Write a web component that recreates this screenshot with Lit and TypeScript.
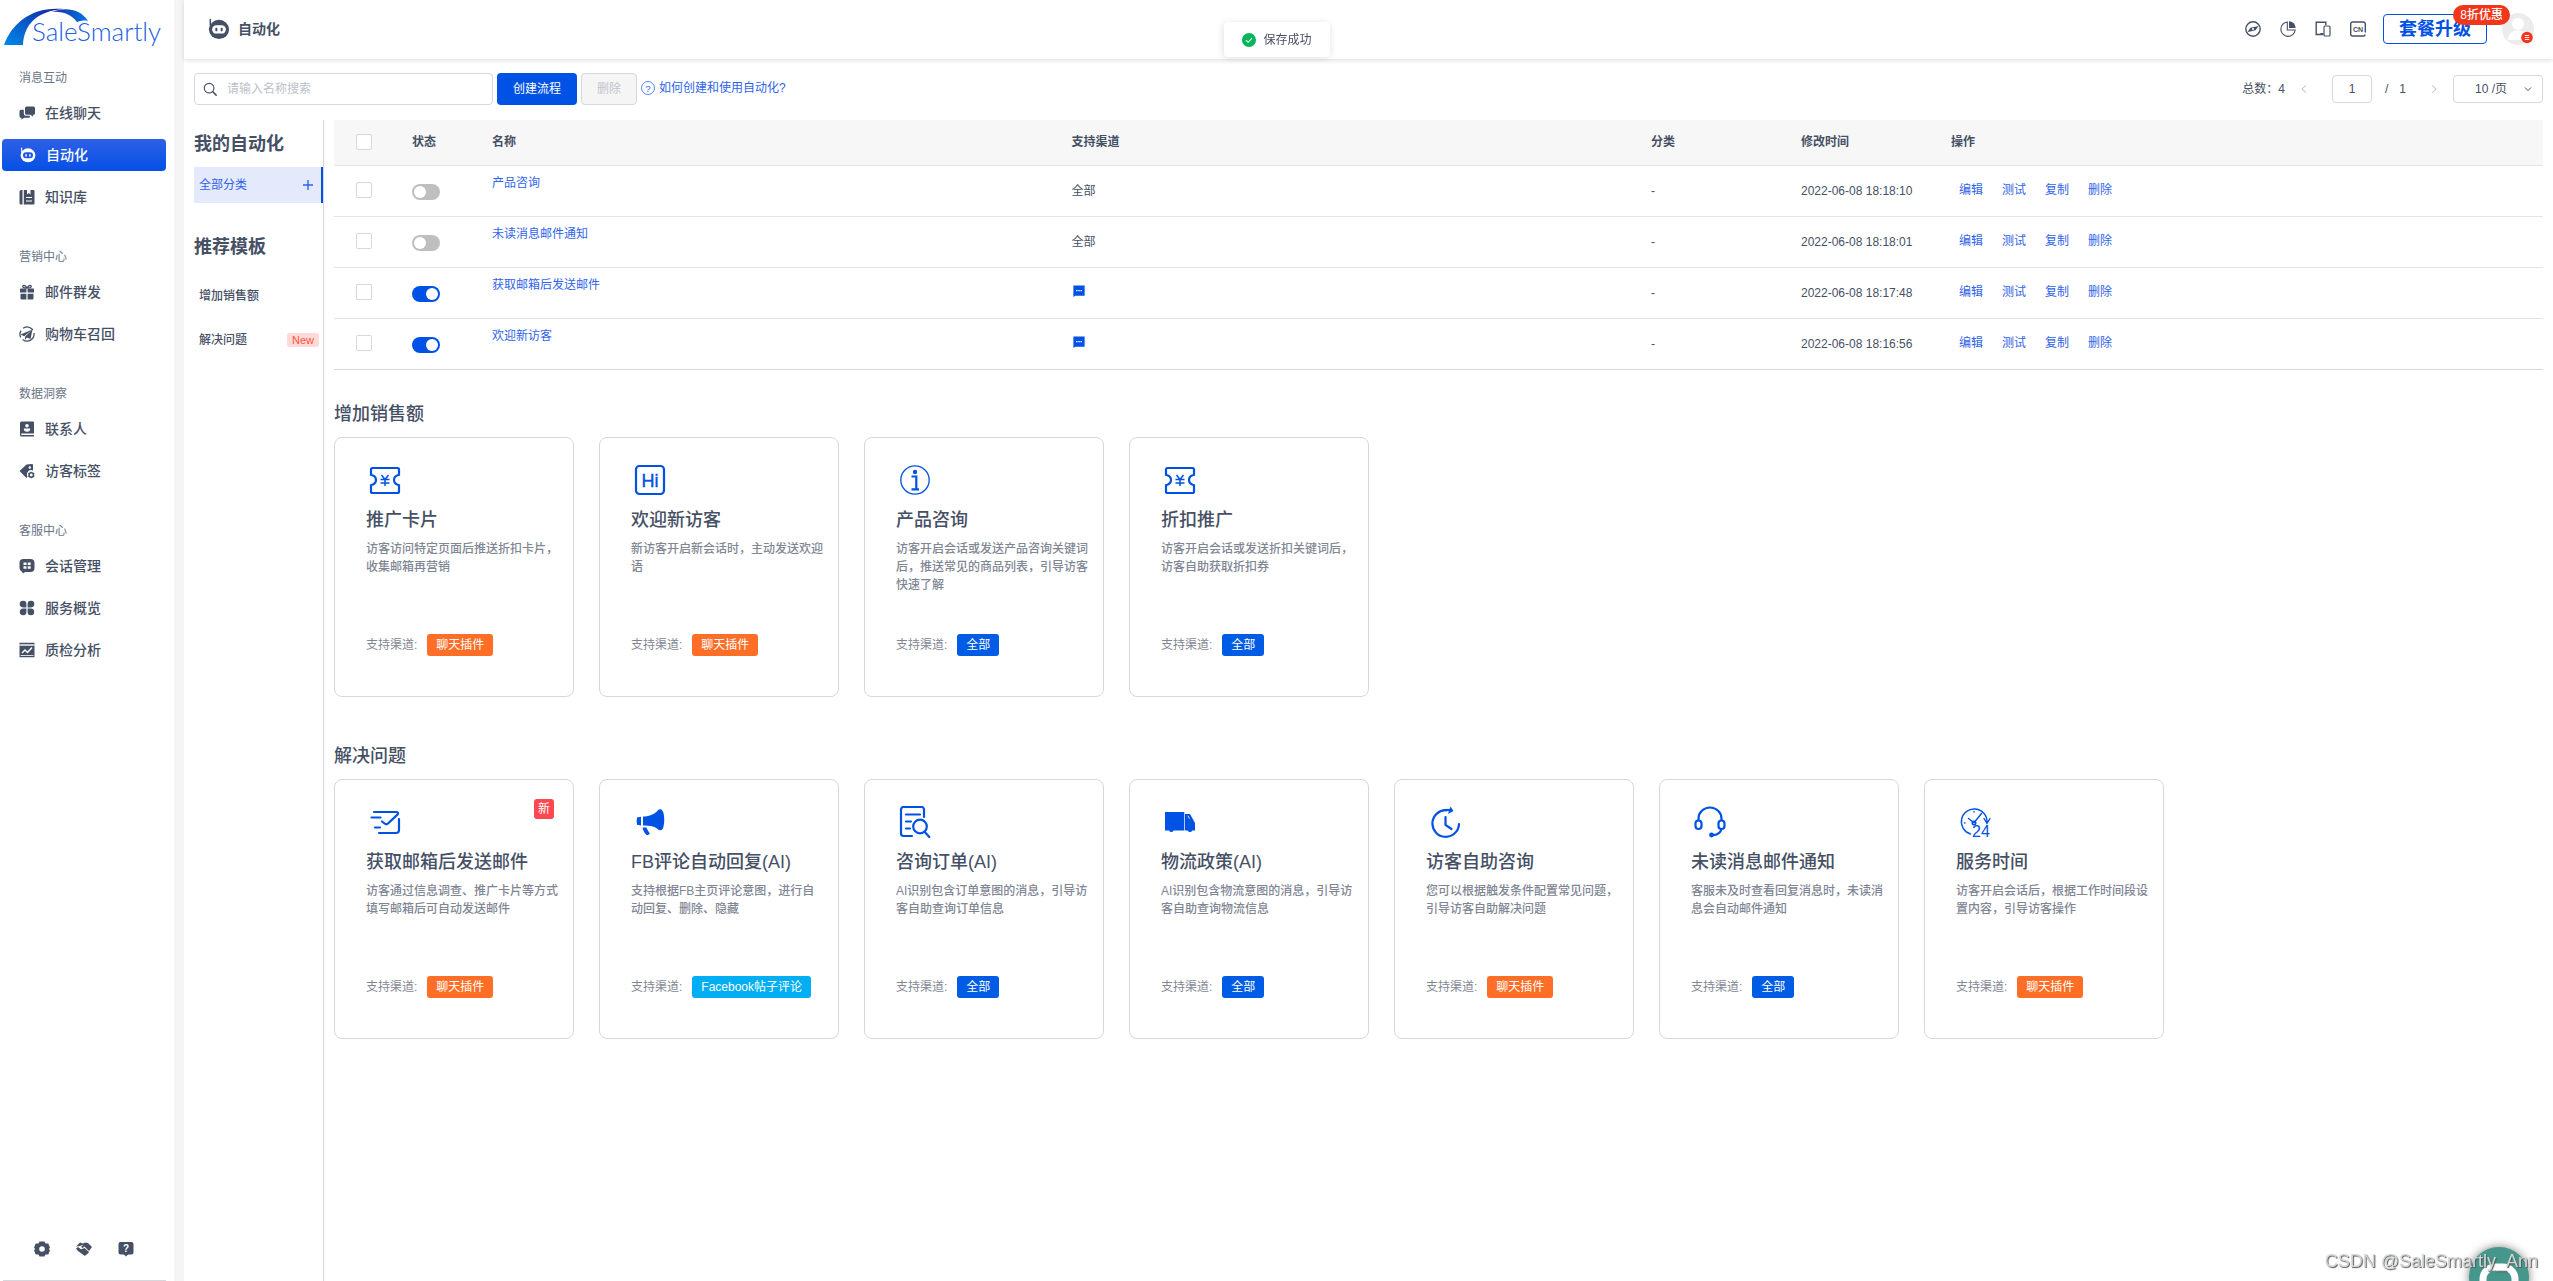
import { LitElement, html, svg, css, nothing } from "lit";
import { customElement, state } from "lit/decorators.js";
import { classMap } from "lit/directives/class-map.js";

const icon = (box: number, size: string, body: unknown) => html`
  <svg class="icon ${size}" viewBox="0 0 ${box} ${box}" aria-hidden="true">${body}</svg>
`;

const robot = (hole: string) => svg`
  <path d="M2.5 1.5v6" stroke="currentColor" stroke-width="1.6" stroke-linecap="round" fill="none"/>
  <ellipse cx="12" cy="12.500" rx="11" ry="10.500" fill="currentColor"/>
  <rect x="4.500" y="8" width="15" height="9" rx="4.500" fill="${hole}"/>
  <rect x="8" y="10.500" width="2.200" height="4" rx="1" fill="currentColor"/>
  <rect x="13.800" y="10.500" width="2.200" height="4" rx="1" fill="currentColor"/>`;

const glyphs = {
  chat: svg`
    <path fill="currentColor" d="M7.500 1.500h7A1.500 1.500 0 0 1 16 3v5.200a1.500 1.500 0 0 1-1.500 1.500H14v2l-2.500-2H7.500A1.500 1.500 0 0 1 6 8.200V3a1.500 1.500 0 0 1 1.500-1.500z"/>
    <path fill="currentColor" d="M4.800 4.800H2A1.500 1.500 0 0 0 .5 6.300v5A1.500 1.500 0 0 0 2 12.800h.5v2l2.500-2h4.500a1.500 1.500 0 0 0 1.500-1.500v-.5H7a2.200 2.200 0 0 1-2.200-2.200z"/>`,
  book: svg`
    <path fill="currentColor" d="M.5 2.500A1.500 1.500 0 0 1 2 1h1.500v14.500H2A1.500 1.500 0 0 1 .5 14z"/>
    <path fill="currentColor" d="M4.800 1H8v4.500L9.700 4l1.800 1.500V1h3A1 1 0 0 1 15.500 2v12.500a1 1 0 0 1-1 1H4.800z"/>
    <path d="M7 8.500h6M7 12h6" stroke="#fff" stroke-width="1.200"/>`,
  gift: svg`
    <path d="M8 4C6 .5 3.500 1 3.800 2.600 4 3.700 6 4 8 4zM8 4c2-3.500 4.500-3 4.200-1.400C12 3.700 10 4 8 4z" fill="none" stroke="currentColor" stroke-width="1.300"/>
    <path fill="currentColor" d="M1.500 4.500h5.900v4H1v-3.500zM8.600 4.500h5.900l.5.500v3.500H8.600zM1.500 9.700h5.900V15.500H2.500a1 1 0 0 1-1-1zM8.600 9.700h5.900v4.800a1 1 0 0 1-1 1H8.600z"/>`,
  send: svg`
    <path d="M4.500 2A7 7 0 0 1 13.500 3.500M15 7.500A7 7 0 0 1 4 13.800M1.500 11A7 7 0 0 1 1.800 5" fill="none" stroke="currentColor" stroke-width="1.300" stroke-linecap="round"/>
    <path fill="currentColor" d="M13.500 3.500 1.500 8.500l3.700 1.800zM13.500 3.500 6 10.700v3l2-2.200 3.500 1.500z"/>`,
  contact: svg`
    <path fill="currentColor" d="M2.500.500h11.500a1 1 0 0 1 1 1V12.500H2.800a.6.600 0 0 0 0 1.500H15v1.500H2.500A1.500 1.500 0 0 1 1 14V2A1.500 1.500 0 0 1 2.500.500z"/>
    <circle cx="8" cy="4.800" r="1.800" fill="#fff"/><path fill="#fff" d="M4.800 7.500h6.400a3.200 3.200 0 0 1-6.400 0z"/>`,
  tag: svg`
    <path fill="currentColor" d="M.5 8 7.500 1.500 13 1a1 1 0 0 1 1 1v5.500a4.300 4.300 0 0 0-5.500 6l-1 1.500z"/>
    <circle cx="10.800" cy="4.500" r="1.200" fill="#fff"/>
    <circle cx="12.300" cy="12" r="2.200" fill="none" stroke="currentColor" stroke-width="1.600"/>
    <path d="M12.300 8.700v1M12.300 14.300v1M9.400 10.300l.9.600M14.300 13.100l.9.600M15.200 10.300l-.9.600M10.300 13.100l-.9.600" stroke="currentColor" stroke-width="1.300"/>`,
  session: svg`
    <path fill="currentColor" d="M4.500 1h7A4 4 0 0 1 15.500 5v5a4 4 0 0 1-4 4H6l-2 1.500-1-1.800A3.800 3.800 0 0 1 .5 10V5a4 4 0 0 1 4-4z"/>
    <path d="M4.500 4.500h3v2.600h-3zM8.700 4.500h3v2.600h-3zM4.500 8.200h3v2.600h-3zM8.700 8.200h3v2.600h-3z" fill="#fff"/>`,
  clover: svg`
    <path fill="currentColor" d="M4 .8a3.300 3.300 0 0 1 3.400 3.300v3.300H4A3.300 3.300 0 0 1 4 .8zM12 .8a3.300 3.300 0 0 1 0 6.600H8.600V4.100A3.300 3.300 0 0 1 12 .8zM4 8.600h3.400v3.300A3.300 3.300 0 1 1 4 8.600zM8.600 8.600H12a3.300 3.300 0 1 1-3.400 3.300z"/>`,
  chart: svg`
    <path fill="currentColor" d="M.5.800h15v1.700H.5zM.5 3.500h15V15.300H.5z"/><path d="M1.500 3h13" stroke="#fff" stroke-width=".8"/>
    <path d="M3 11l3-3 2.500 2.500L13 5.500" fill="none" stroke="#fff" stroke-width="1.400"/><path d="M1.500 13.500h13" stroke="#fff" stroke-width=".8"/>`,
  gear: svg`
    <path fill="currentColor" fill-rule="evenodd" d="M5.500.5h5l1 2h2.800l1.700 4.300-1.200 1.200 1.200 1.200-1.700 4.300h-2.800l-1 2h-5l-1-2H1.700L0 9.200 1.200 8 0 6.800l1.700-4.300h2.800zM8 5.200a2.800 2.800 0 1 0 0 5.600 2.800 2.800 0 0 0 0-5.600z"/>`,
  hands: svg`
    <path fill="currentColor" d="M0 5.500 4 1.500l3 1 2-1 3 .5 4 4-3 4L8.500 5.500 6.500 7 5 6l2.500-2.500L4 5z"/>
    <path fill="currentColor" d="m0 7.500 2-1.500 3 2.300L8.500 7l4.500 4-1 1.500-1 .5-1 1.300-1.500.500L2 10z"/>`,
  help: svg`
    <rect x=".5" y="1" width="15" height="12.500" rx="2" fill="currentColor"/><path d="M5.500 13 8 15.500l2.500-2.500z" fill="currentColor"/>
    <text x="8" y="11" text-anchor="middle" font-size="10" font-weight="700" fill="#fff">?</text>`,
  compass: svg`
    <circle cx="8" cy="8" r="7.200" fill="none" stroke="currentColor" stroke-width="1.400"/>
    <path fill="currentColor" fill-rule="evenodd" d="M13.500 5 10.500 9.300 2.500 11 5.500 6.700zM8 7.100a1 1 0 1 0 0 2 1 1 0 0 0 0-2z"/>`,
  pie: svg`
    <path d="M7.300 1A7.200 7.200 0 1 0 15.200 9H7.300z" fill="none" stroke="currentColor" stroke-width="1.100"/>
    <path fill="currentColor" d="M9 .3A7 7 0 0 1 15.700 7H9z"/>`,
  devices: svg`
    <path d="M7.500 13.500H1.200V1.200h9.600v3" fill="none" stroke="currentColor" stroke-width="1.400"/>
    <rect x="9" y="5" width="6" height="10" rx="1" fill="none" stroke="currentColor" stroke-width="1.200"/>
    <path d="M5.500 13h3" stroke="currentColor" stroke-width="2"/>`,
  lang: svg`
    <path d="M15.300 11.500V3A2 2 0 0 0 13.300 1H2.700A2 2 0 0 0 .7 3v10a2 2 0 0 0 2 2h10.600a2 2 0 0 0 2-1.500" fill="none" stroke="currentColor" stroke-width="1.400"/>
    <text x="8" y="10.500" text-anchor="middle" font-size="7" font-weight="700" fill="currentColor">CN</text>`,
  search: svg`
    <circle cx="7" cy="7" r="5.500" fill="none" stroke="currentColor" stroke-width="1.300"/>
    <path d="M11.200 11.200 15 15" stroke="currentColor" stroke-width="1.700" stroke-linecap="round"/>`,
  question: svg`
    <circle cx="8" cy="8" r="7.400" fill="none" stroke="currentColor" stroke-width=".9"/>
    <text x="8" y="12" text-anchor="middle" font-size="11" fill="currentColor">?</text>`,
  plus: svg`<path d="M8 0v16M0 8h16" stroke="currentColor" stroke-width="2.200"/>`,
  left: svg`<path d="M10.500 3 5.500 8l5 5" fill="none" stroke="currentColor" stroke-width="1.400"/>`,
  right: svg`<path d="M5.500 3l5 5-5 5" fill="none" stroke="currentColor" stroke-width="1.400"/>`,
  down: svg`<path d="M3 5.500l5 5 5-5" fill="none" stroke="currentColor" stroke-width="1.600"/>`,
  ok: svg`<circle cx="8" cy="8" r="8" fill="#07b55b"/><path d="M4.500 8.200 7 10.600l4.500-4.800" fill="none" stroke="#fff" stroke-width="1.200"/>`,
  plugin: svg`<path fill="currentColor" d="M.5.500h15v13.800H3L.5 16z"/><path d="M4 7.500h2M7 7.500h2M10 7.500h2" stroke="#fff" stroke-width="1.700"/>`,
};

const cardGlyphs = {
  coupon: svg`
    <path d="M3.500 4h25a1.500 1.500 0 0 1 1.500 1.500v5.300c-3 .8-5 2.900-5 5.200s2 4.400 5 5.200v6.300a1.500 1.500 0 0 1-1.500 1.500h-25A1.500 1.500 0 0 1 2 27.500v-6.300c3-.8 5-2.900 5-5.200s-2-4.400-5-5.200V5.500A1.500 1.500 0 0 1 3.500 4z" fill="none" stroke="currentColor" stroke-width="2.200"/>
    <path d="m12.500 11 3.500 4.500 3.500-4.500M16 15v7M11.500 15.500h9M11.500 19h9" fill="none" stroke="currentColor" stroke-width="1.500"/>`,
  hi: svg`
    <rect x="2" y="2" width="28" height="28" rx="3.500" fill="none" stroke="currentColor" stroke-width="2.200"/>
    <text x="16" y="22.500" text-anchor="middle" font-size="18" fill="currentColor" stroke="currentColor" stroke-width=".4">Hi</text>`,
  info: svg`
    <circle cx="16" cy="16" r="14.200" fill="none" stroke="currentColor" stroke-width="1.300"/>
    <circle cx="16" cy="8" r="2.200" fill="currentColor"/><path d="M12.500 12.500h4.800V25M12.500 25.300h7.500" fill="none" stroke="currentColor" stroke-width="2.200"/>`,
  mail: svg`
    <g fill="none" stroke="currentColor" stroke-width="2.200" stroke-linecap="round" stroke-linejoin="round">
      <path d="M5 6h22.500a1.500 1.500 0 0 1 1.200 2.400L19 17.500a2.500 2.500 0 0 1-3.400 0L13 15.500M30 13v11a3 3 0 0 1-3 3H10M2.500 11.500h9M6 21.500h5"/></g>`,
  horn: svg`
    <path fill="currentColor" d="M9 10.500c7-.2 11.500-2.500 14.500-5.800C26 2 28.500 3 29.500 7c1 4.500 1 9 0 13.500-.8 4-3.500 5-6 2.500C20.500 20.200 16 19.700 9 19.500zM3 11.500l4-.8v8.800l-4-.8a17 17 0 0 1 0-7.200z"/>
    <path fill="currentColor" d="M8.500 21.500h3.800l3.500 6.300c-1.800 1.800-3.500 1.500-4.500 0-1.300-1.900-2.500-4-2.800-6.300z"/>`,
  order: svg`
    <g fill="none" stroke="currentColor" stroke-width="2.200" stroke-linecap="round">
      <path d="M25 11V3.500A2.500 2.500 0 0 0 22.500 1H4.500A2.500 2.500 0 0 0 2 3.500v24A2.500 2.500 0 0 0 4.500 30H13M7 8.500h14M7 15.500h5M7 22.500h4"/>
      <circle cx="21" cy="20.500" r="6.800"/><path d="m25.800 26 4.500 5"/></g>`,
  truck: svg`
    <path fill="currentColor" d="M1 6h19.300v18.500H9.500a2.400 2.400 0 0 1-4.500 0H1zM21 8h5l5 9v7.500h-2.800a2.400 2.400 0 0 1-4.500 0H21z"/>
    <path d="M24 9.800l1.500 3" stroke="#fff" stroke-width=".8"/>`,
  clock: svg`
    <path d="M17.500 4.200A13.300 13.300 0 1 0 30 18" fill="none" stroke="currentColor" stroke-width="2.200" stroke-linecap="round"/>
    <path fill="currentColor" d="M21.500.5 24.500 5 19 8z"/><path d="M16 4h6" stroke="currentColor" stroke-width="2.200"/>
    <path d="M16.500 11v8l6 4" fill="none" stroke="currentColor" stroke-width="2.200" stroke-linecap="round"/>`,
  headset: svg`
    <g fill="none" stroke="currentColor" stroke-width="2.200">
      <path d="M4.500 15v-2.500A11.500 11 0 0 1 27.500 12.500V15"/>
      <rect x="1.500" y="14.500" width="6" height="8.500" rx="3"/><rect x="24.500" y="14.500" width="6" height="8.500" rx="3"/>
      <path d="M27.500 23c-1 4-5 6-9 6.200"/></g>
    <circle cx="17.500" cy="29" r="2.400" fill="currentColor"/>`,
  hours: svg`
    <g fill="none" stroke="currentColor" stroke-width="1.400" stroke-linecap="round">
      <path d="M11.500 28A12.800 12.800 0 1 1 28 16M25 12.500 28 17.500l3-5M9.500 12.500l5.500 4.200 7.500-9.200"/>
      <circle cx="15" cy="17" r="1.800"/><path d="M15 5.500v.5M5.500 17H6"/></g>
    <text x="22" y="30.500" text-anchor="middle" font-size="16" fill="currentColor">24</text>`,
};

type Glyph = keyof typeof glyphs;
type CardGlyph = keyof typeof cardGlyphs;
type Channel = "plugin" | "all" | "facebook";

interface Card { icon: CardGlyph; title: string; text: string; channel: Channel; fresh?: boolean }
interface Flow { name: string; on: boolean; plugin: boolean; time: string }

const channelNames: Record<Channel, string> = {
  plugin: "聊天插件",
  all: "全部",
  facebook: "Facebook帖子评论",
};

const menu: { title: string; items: { icon: Glyph | "robot"; label: string; active?: boolean }[] }[] = [
  { title: "消息互动", items: [
    { icon: "chat", label: "在线聊天" },
    { icon: "robot", label: "自动化", active: true },
    { icon: "book", label: "知识库" },
  ] },
  { title: "营销中心", items: [
    { icon: "gift", label: "邮件群发" },
    { icon: "send", label: "购物车召回" },
  ] },
  { title: "数据洞察", items: [
    { icon: "contact", label: "联系人" },
    { icon: "tag", label: "访客标签" },
  ] },
  { title: "客服中心", items: [
    { icon: "session", label: "会话管理" },
    { icon: "clover", label: "服务概览" },
    { icon: "chart", label: "质检分析" },
  ] },
];

const sections: { title: string; cards: Card[] }[] = [
  { title: "增加销售额", cards: [
    { icon: "coupon", title: "推广卡片", text: "访客访问特定页面后推送折扣卡片，收集邮箱再营销", channel: "plugin" },
    { icon: "hi", title: "欢迎新访客", text: "新访客开启新会话时，主动发送欢迎语", channel: "plugin" },
    { icon: "info", title: "产品咨询", text: "访客开启会话或发送产品咨询关键词后，推送常见的商品列表，引导访客快速了解", channel: "all" },
    { icon: "coupon", title: "折扣推广", text: "访客开启会话或发送折扣关键词后，访客自助获取折扣券", channel: "all" },
  ] },
  { title: "解决问题", cards: [
    { icon: "mail", title: "获取邮箱后发送邮件", text: "访客通过信息调查、推广卡片等方式填写邮箱后可自动发送邮件", channel: "plugin", fresh: true },
    { icon: "horn", title: "FB评论自动回复(AI)", text: "支持根据FB主页评论意图，进行自动回复、删除、隐藏", channel: "facebook" },
    { icon: "order", title: "咨询订单(AI)", text: "AI识别包含订单意图的消息，引导访客自助查询订单信息", channel: "all" },
    { icon: "truck", title: "物流政策(AI)", text: "AI识别包含物流意图的消息，引导访客自助查询物流信息", channel: "all" },
    { icon: "clock", title: "访客自助咨询", text: "您可以根据触发条件配置常见问题，引导访客自助解决问题", channel: "plugin" },
    { icon: "headset", title: "未读消息邮件通知", text: "客服未及时查看回复消息时，未读消息会自动邮件通知", channel: "all" },
    { icon: "hours", title: "服务时间", text: "访客开启会话后，根据工作时间段设置内容，引导访客操作", channel: "plugin" },
  ] },
];

@customElement("app-root")
export class AppRoot extends LitElement {
  @state() private flows: Flow[] = [
    { name: "产品咨询", on: false, plugin: false, time: "2022-06-08 18:18:10" },
    { name: "未读消息邮件通知", on: false, plugin: false, time: "2022-06-08 18:18:01" },
    { name: "获取邮箱后发送邮件", on: true, plugin: true, time: "2022-06-08 18:17:48" },
    { name: "欢迎新访客", on: true, plugin: true, time: "2022-06-08 18:16:56" },
  ];

  static styles = css`
    :host {
      --blue: #0052e5;
      --link: #2f63ea;
      --ink: #465065;
      --muted: #7f8694;
      --line: #d6d7dc;
      display: block;
      font: 12px/18px "Liberation Sans", "Noto Sans CJK SC", sans-serif;
      color: var(--ink);
      background: #fff;
    }
    * { box-sizing: border-box; }
    h1, h2, h3, p, ul { margin: 0; padding: 0; font-weight: 500; }
    ul { list-style: none; }
    a { color: inherit; text-decoration: none; }
    button, input, select { font: inherit; color: inherit; margin: 0; }
    button { background: none; border: 0; padding: 0; cursor: pointer; }
    .icon { display: block; flex: none; width: 16px; height: 16px; }
    .icon.s10 { width: 10px; height: 10px; }
    .icon.s12 { width: 12px; height: 12px; }
    .icon.s14 { width: 14px; height: 14px; }
    .icon.s22 { width: 22px; height: 22px; }
    .icon.s32 { width: 32px; height: 32px; }

    .shell { display: flex; min-height: 100vh; }
    .side {
      flex: none; width: 184px; border-right: 10px solid #f5f5f5;
      display: flex; flex-direction: column;
    }
    .logo { display: block; width: 174px; height: 39px; margin-top: 7px; overflow: visible; }
    .side nav { margin-top: -7px; }
    .group { padding: 30px 19px 5px; color: #697386; }
    .item {
      display: flex; align-items: center; gap: 10px;
      height: 32px; margin: 5px 8px 5px 2px; padding-left: 17px;
      font-size: 14px; border-radius: 4px;
    }
    .menu { display: flex; flex-direction: column; }
    .menu li { height: 42px; overflow: hidden; }
    .item.active { color: #fff; background: linear-gradient(#2f60e6, #0550e6); padding-left: 18px; }
    .tools { margin-top: auto; padding: 0 0 22px 34px; display: flex; gap: 26px; }
    .foot { height: 2px; margin: 0 8px 0 3px; border-bottom: 1px solid var(--line); }

    .main { flex: 1; min-width: 0; display: flex; flex-direction: column; }
    .top {
      display: flex; align-items: center; height: 59px; padding: 0 19px 2px 24px;
      box-shadow: 0 1px 5px rgba(0, 0, 0, .14);
    }
    .top h1 { font-size: 14px; line-height: 20px; margin-left: 8px; font-weight: 700; }
    .actions { margin-left: auto; display: flex; align-items: center; gap: 19px; }
    .actions button { display: block; }
    .upgrade { position: relative; margin-left: -2px; }
    .upgrade button {
      height: 30px; padding: 0 15px; border: 1px solid var(--blue); border-radius: 4px;
      font-size: 18px; font-weight: 700; color: var(--blue);
    }
    .promo {
      position: absolute; right: -23px; top: -9px; z-index: 1;
      height: 20px; line-height: 20px; padding: 0 7px; border-radius: 10px;
      background: #f2361b; color: #fff; font-weight: 500; white-space: nowrap;
    }
    .avatar { margin-left: -4px; }

    .bar { display: flex; align-items: center; gap: 4px; padding: 14px 10px 15px; }
    .search {
      display: flex; align-items: center; gap: 10px; width: 299px; height: 32px; padding: 0 8px;
      border: 1px solid var(--line); border-radius: 4px;
    }
    .search input { flex: 1; min-width: 0; border: 0; outline: 0; padding: 0; background: none; }
    .search input::placeholder { color: #bcc0c8; opacity: 1; }
    .primary { height: 32px; padding: 0 16px; border-radius: 4px; background: var(--blue); color: #fff; }
    .disabled { height: 32px; padding: 0 15px; border-radius: 4px; border: 1px solid var(--line); background: #f5f5f5; color: #c2c4ca; }
    .howto { display: flex; align-items: center; gap: 4px; color: var(--link); height: 32px; padding-bottom: 3px; }
    .pager { margin-left: auto; display: flex; align-items: center; }
    .pager button { color: #bcc0c8; margin: 0 14px 0 13px; }
    .pager .page {
      width: 40px; height: 28px; padding: 0; text-align: center;
      border: 1px solid var(--line); border-radius: 4px; outline: 0; margin: 0 13px 0 8px;
    }
    .pager .slash { margin-right: 11px; }
    .pager .next { margin: 0 13px 0 22px; }
    .size { position: relative; display: flex; align-items: center; }
    .size select {
      appearance: none; width: 90px; height: 28px; padding: 0 26px 0 21px;
      border: 1px solid var(--line); border-radius: 4px; background: #fff; outline: 0;
    }
    .size .icon { position: absolute; right: 10px; pointer-events: none; }

    .body { flex: 1; display: flex; gap: 10px; padding: 0 10px; }
    .cats { flex: none; width: 130px; padding-top: 11px; border-right: 1px solid var(--line); }
    .cats h2, .section h2 { font-size: 18px; line-height: 26px; }
    .cats h2 { font-weight: 700; }
    .cat { display: flex; align-items: center; justify-content: space-between; height: 44px; padding: 0 4px 0 5px; }
    .cat.on {
      height: 36px; margin: 10px 0 31px; padding-right: 8px;
      color: var(--link); background: #e4eafb; border-right: 2px solid var(--blue);
    }
    .cat.on button { display: flex; }
    .cats ul { margin-top: 14px; }
    .new { padding: 0 5px; line-height: 14px; font-size: 11px; border-radius: 3px; background: #ffdad6; color: #ff5542; }

    .content { flex: 1; min-width: 0; }
    table { width: 100%; table-layout: fixed; border-collapse: separate; border-spacing: 0; border-bottom: 1px solid var(--line); }
    th, td { padding: 0 16px; text-align: left; border-bottom: 1px solid #e3e4e7; }
    th { height: 46px; padding-bottom: 2px; background: #f7f7f7; font-weight: 700; }
    td { height: 51px; }
    tbody tr:last-child td { border-bottom: 0; height: 50px; }
    .c-check { width: 62px; } .c-state { width: 80px; } .c-fixed { width: 150px; } .c-ops { width: 608px; }
    th.pick, td.pick { padding-left: 22px; padding-bottom: 2px; }
    td.name { vertical-align: top; padding-top: 8px; color: var(--link); }
    td.mark { color: var(--blue); }
    td.mark .icon { margin: 0 0 4px 1px; }
    .check {
      appearance: none; display: block; width: 16px; height: 16px;
      border: 1px solid var(--line); border-radius: 2px; background: #fff;
    }
    .check:checked { background: var(--blue); border-color: var(--blue); }
    .switch {
      appearance: none; display: block; width: 28px; height: 16px; padding: 2px; border-radius: 8px;
      margin-top: 2px; background: #bfbfbf;
    }
    .switch::before { content: ""; display: block; width: 12px; height: 12px; border-radius: 50%; background: #fff; }
    .switch:checked { background: var(--blue); }
    .switch:checked::before { margin-left: 12px; }
    .ops { display: flex; gap: 19px; padding: 0 0 2px 8px; color: var(--link); }

    .sections { display: flex; flex-direction: column; gap: 46px; padding: 31px 0; }
    .cards { display: flex; flex-wrap: wrap; gap: 25px; margin-top: 10px; }
    .card {
      position: relative; width: 240px; min-height: 260px; padding: 26px 14px 26px 31px;
      border: 1px solid var(--line); border-radius: 8px; color: var(--muted);
    }
    .card .icon { margin-left: 3px; color: var(--blue); }
    .card h3 { margin: 11px 0 7px; font-size: 18px; line-height: 26px; color: var(--ink); white-space: nowrap; }
    .card p { min-height: 94px; }
    .via { display: flex; align-items: center; gap: 10px; }
    .tag { height: 22px; line-height: 22px; padding: 0 9px; border-radius: 3px; color: #fff; background: #005be5; }
    .tag.plugin { background: #ff6e26; }
    .tag.facebook { background: #00aef3; }
    .fresh {
      position: absolute; top: 19px; right: 19px; width: 20px; line-height: 20px; text-align: center;
      border-radius: 3px; background: #ff4850; color: #fff;
    }

    .toast {
      position: fixed; top: 22px; left: 50%; transform: translateX(-50%); z-index: 3;
      display: flex; align-items: center; gap: 8px; height: 35px; padding: 0 18px;
      border-radius: 4px; background: #fff; box-shadow: 0 1px 7px rgba(0, 0, 0, .12);
    }
    .dock { position: fixed; right: 0; bottom: 0; width: 240px; height: 54px; overflow: hidden; }
    .bubble {
      position: absolute; right: 24px; top: 20px; width: 60px; height: 60px; border-radius: 50%;
      background: #45968b; box-shadow: 0 0 10px rgba(0, 0, 0, .5);
    }
    .bubble svg { display: block; width: 60px; height: 60px; }
    .credit {
      position: absolute; right: 15px; top: 22px; font-size: 18px; line-height: 24px; white-space: nowrap;
      color: #d4d6d6; text-shadow: 1px 1px 1px #555;
    }
  `;

  private flip(index: number) {
    this.flows = this.flows.map((f, i) => (i === index ? { ...f, on: !f.on } : f));
  }

  private renderLogo() {
    return html`
      <svg class="logo" viewBox="0 0 174 39" role="img" aria-label="SaleSmartly">
        <defs>
          <linearGradient id="arc" x1="0" y1="1" x2="1" y2="0">
            <stop offset="0" stop-color="#0088e8"/><stop offset=".55" stop-color="#0a52c4"/><stop offset="1" stop-color="#1a1c9c"/>
          </linearGradient>
          <linearGradient id="tip" x1="0" y1="0" x2="1" y2="0">
            <stop offset="0" stop-color="#1c2aa8"/><stop offset="1" stop-color="#0078e0"/>
          </linearGradient>
        </defs>
        <path fill="url(#arc)" d="M4 38C12 16 32-1 64 2 36 4 24 18 23 38z"/>
        <path fill="url(#tip)" d="M52 5C64 0 80 1 88 14c-4-1-8 0-11 1C72 8 63 4 52 5z"/>
        <text x="32" y="34" font-size="26" font-weight="300" font-family="Lato, Roboto, sans-serif" fill="#2260e0">SaleSmartly</text>
      </svg>`;
  }

  private renderSide() {
    return html`
      <aside class="side">
        ${this.renderLogo()}
        <nav>
          ${menu.map((g) => html`
            <div class="group">${g.title}</div>
            <ul class="menu">
              ${g.items.map((i) => html`
                <li><a class=${classMap({ item: true, active: !!i.active })} href="#">
                  ${i.icon === "robot" ? icon(24, "", robot("#1c58e6")) : icon(16, "", glyphs[i.icon])}
                  ${i.label}
                </a></li>`)}
            </ul>`)}
        </nav>
        <div class="tools">
          <button aria-label="设置">${icon(16, "", glyphs.gear)}</button>
          <button aria-label="合作">${icon(16, "", glyphs.hands)}</button>
          <button aria-label="帮助">${icon(16, "", glyphs.help)}</button>
        </div>
        <div class="foot"></div>
      </aside>`;
  }

  private renderTop() {
    return html`
      <header class="top">
        ${icon(24, "s22", robot("#fff"))}
        <h1>自动化</h1>
        <div class="actions">
          <button aria-label="导航">${icon(16, "", glyphs.compass)}</button>
          <button aria-label="统计">${icon(16, "", glyphs.pie)}</button>
          <button aria-label="设备">${icon(16, "", glyphs.devices)}</button>
          <button aria-label="语言">${icon(16, "", glyphs.lang)}</button>
          <div class="upgrade"><button>套餐升级</button><span class="promo">8折优惠</span></div>
          <button class="avatar" aria-label="账号">
            ${icon(32, "s32", svg`
              <circle cx="16" cy="16" r="16" fill="#ececec"/>
              <circle cx="16" cy="11" r="6" fill="#fff"/>
              <path d="M6 27c0-6 4-9.500 10-9.500S26 21 26 27z" fill="#fff"/>
              <circle cx="25" cy="24.500" r="5.800" fill="#f2361b"/>
              <path d="M22.800 22.500h4.400M22.800 24.500h4.400M22.800 26.500h4.400" stroke="#fff" stroke-width=".9"/>`)}
          </button>
        </div>
      </header>`;
  }

  private renderBar() {
    return html`
      <div class="bar">
        <label class="search">
          ${icon(16, "s14", glyphs.search)}
          <input type="search" placeholder="请输入名称搜索" aria-label="搜索名称">
        </label>
        <button class="primary">创建流程</button>
        <button class="disabled" disabled>删除</button>
        <a class="howto" href="#">${icon(16, "s14", glyphs.question)}如何创建和使用自动化?</a>
        <div class="pager">
          <span>总数：4</span>
          <button aria-label="上一页">${icon(16, "s12", glyphs.left)}</button>
          <input class="page" type="text" value="1" aria-label="页码">
          <span class="slash">/</span><span>1</span>
          <button class="next" aria-label="下一页">${icon(16, "s12", glyphs.right)}</button>
          <label class="size">
            <select aria-label="每页条数"><option>10 /页</option></select>
            ${icon(16, "s10", glyphs.down)}
          </label>
        </div>
      </div>`;
  }

  private renderTable() {
    return html`
      <table>
        <colgroup>
          <col class="c-check"><col class="c-state"><col><col>
          <col class="c-fixed"><col class="c-fixed"><col class="c-ops">
        </colgroup>
        <thead>
          <tr>
            <th class="pick"><input class="check" type="checkbox" aria-label="全选"></th>
            <th>状态</th><th>名称</th><th>支持渠道</th><th>分类</th><th>修改时间</th><th>操作</th>
          </tr>
        </thead>
        <tbody>
          ${this.flows.map((f, i) => html`
            <tr>
              <td class="pick"><input class="check" type="checkbox" aria-label=${f.name}></td>
              <td><input class="switch" type="checkbox" role="switch" aria-label=${f.name}
                .checked=${f.on} @change=${() => this.flip(i)}></td>
              <td class="name"><a href="#">${f.name}</a></td>
              <td class=${classMap({ mark: f.plugin })}>${f.plugin ? icon(16, "s12", glyphs.plugin) : "全部"}</td>
              <td>-</td>
              <td>${f.time}</td>
              <td><div class="ops">
                <button>编辑</button><button>测试</button><button>复制</button><button>删除</button>
              </div></td>
            </tr>`)}
        </tbody>
      </table>`;
  }

  private renderCard(c: Card) {
    return html`
      <article class="card">
        ${icon(32, "s32", cardGlyphs[c.icon])}
        ${c.fresh ? html`<span class="fresh">新</span>` : nothing}
        <h3>${c.title}</h3>
        <p>${c.text}</p>
        <div class="via"><span>支持渠道:</span><span class="tag ${c.channel}">${channelNames[c.channel]}</span></div>
      </article>`;
  }

  render() {
    return html`
      <div class="shell">
        ${this.renderSide()}
        <main class="main">
          ${this.renderTop()}
          ${this.renderBar()}
          <div class="body">
            <nav class="cats">
              <h2>我的自动化</h2>
              <div class="cat on"><a href="#">全部分类</a><button aria-label="新增分类">${icon(16, "s10", glyphs.plus)}</button></div>
              <h2>推荐模板</h2>
              <ul>
                <li class="cat"><a href="#">增加销售额</a></li>
                <li class="cat"><a href="#">解决问题</a><span class="new">New</span></li>
              </ul>
            </nav>
            <div class="content">
              ${this.renderTable()}
              <div class="sections">
                ${sections.map((s) => html`
                  <section class="section">
                    <h2>${s.title}</h2>
                    <div class="cards">${s.cards.map((c) => this.renderCard(c))}</div>
                  </section>`)}
              </div>
            </div>
          </div>
        </main>
      </div>
      <div class="toast" role="status">${icon(16, "s14", glyphs.ok)}<span>保存成功</span></div>
      <div class="dock">
        <button class="bubble" aria-label="在线客服">
          <svg viewBox="0 0 60 60" aria-hidden="true">
            <rect x="14" y="20" width="32" height="28" rx="12" fill="none" stroke="#fff" stroke-width="7"/>
          </svg>
        </button>
        <span class="credit">CSDN @SaleSmartly_Ann</span>
      </div>`;
  }
}
